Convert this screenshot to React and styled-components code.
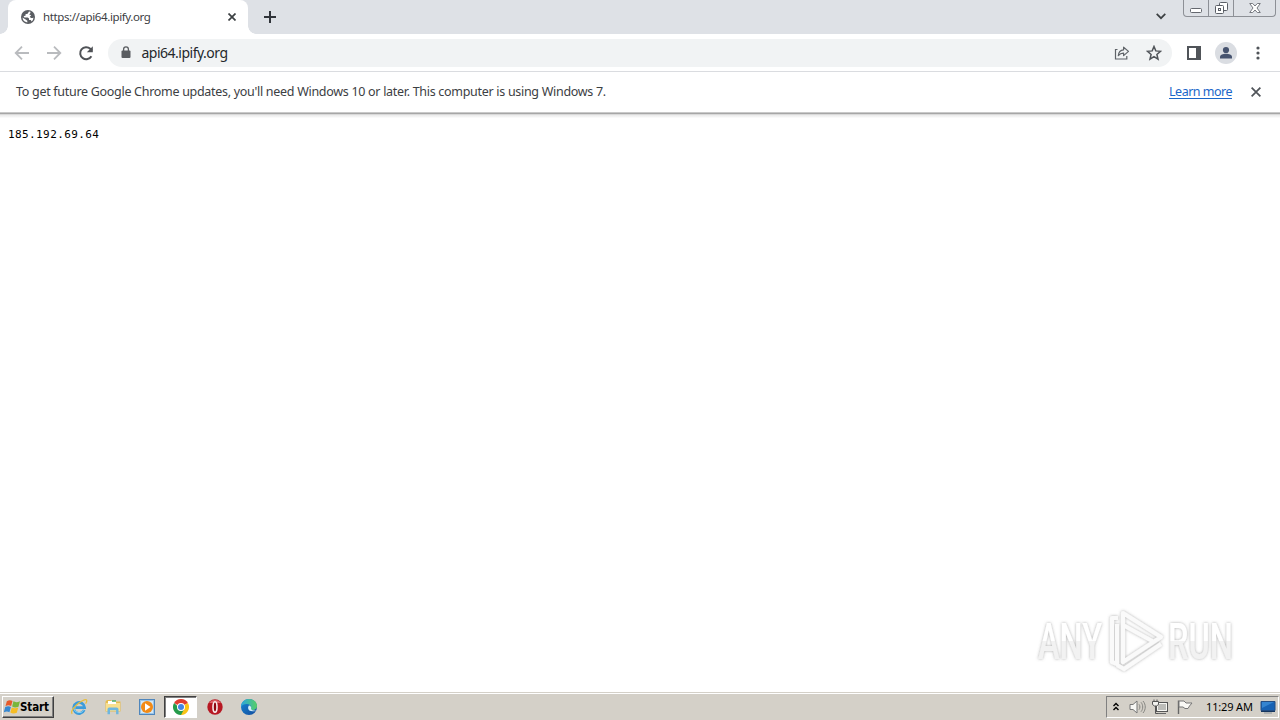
import React from "react";
import styled, { createGlobalStyle } from "styled-components";

const GlobalStyle = createGlobalStyle`
  *, *::before, *::after { box-sizing: border-box; }
  body { margin: 0; background: #fff; font-family: "Noto Sans", "DejaVu Sans", sans-serif; overflow: hidden; }
  svg { display: block; flex: none; }
`;

const Desktop = styled.div`
  width: 1280px;
  height: 720px;
  display: flex;
  flex-direction: column;
  background: #fff;
  position: relative;
`;

const TabStrip = styled.header`
  height: 34px;
  flex: none;
  display: flex;
  background: #dee1e6;
  padding-left: 8px;
`;

const Tab = styled.div`
  width: 240px;
  height: 34px;
  display: flex;
  align-items: center;
  background: #fff;
  border-radius: 8px 8px 0 0;
  padding: 0 12px 0 13px;
  position: relative;
  &::before, &::after {
    content: "";
    position: absolute;
    bottom: 0;
    width: 8px;
    height: 8px;
  }
  &::before { left: -8px; background: radial-gradient(circle at 0 0, transparent 7.5px, #fff 8px); }
  &::after { right: -8px; background: radial-gradient(circle at 100% 0, transparent 7.5px, #fff 8px); }
`;

const Label = styled.span`
  font-size: ${(p) => p.$size || 12}px;
  line-height: 16px;
  letter-spacing: ${(p) => p.$track || 0}px;
  color: ${(p) => p.$color || "#3c4043"};
  white-space: pre;
`;

const TabTitle = styled(Label)`
  flex: 1;
  margin-left: 8px;
`;

const NewTab = styled.div`
  display: flex;
  align-items: center;
  margin-left: 15px;
`;

const StripEnd = styled.div`
  margin-left: auto;
  display: flex;
  padding-right: 4px;
`;

const TabSearch = styled.div`
  padding: 13px 17px 0 0;
`;

const WindowControls = styled.div`
  height: 17px;
  width: 93px;
  display: flex;
  border: 1px solid #8d9096;
  border-top: 0;
  border-radius: 0 0 4px 4px;
`;

const WindowButton = styled.div`
  width: ${(p) => p.$width}px;
  display: flex;
  align-items: center;
  justify-content: center;
  & + & { border-left: 1px solid #8d9096; }
`;

const Toolbar = styled.div`
  height: 38px;
  flex: none;
  display: flex;
  align-items: center;
  padding: 0 13px;
  border-bottom: 1px solid #dadce0;
`;

const NavButtons = styled.div`
  display: flex;
  gap: 14px;
  width: 95px;
`;

const AddressBar = styled.div`
  width: 1064px;
  height: 28px;
  display: flex;
  align-items: center;
  gap: 16px;
  background: #f1f3f4;
  border-radius: 14px;
  padding: 0 10px 0 11px;
`;

const Url = styled(Label)`
  flex: 1;
  margin-left: -7.5px;
`;

const ToolbarEnd = styled.div`
  display: flex;
  align-items: center;
  margin-left: 14px;
`;

const Avatar = styled.div`
  margin: 0 13px;
`;

const InfoBar = styled.div`
  height: 46px;
  flex: none;
  display: flex;
  align-items: flex-start;
  padding: 12px 19px 0 16px;
  background: linear-gradient(#fff 40px, #c9c9c9 40px, #c9c9c9 41px, #a6a6a6 41px, #a6a6a6 42px, #d9d9d9 42px, #d9d9d9 43px, #eaeaea 43px, #f5f5f5 45px, #fff 46px);
`;

const LearnMore = styled(Label)`
  margin-left: auto;
  text-decoration: underline;
  text-underline-offset: 2px;
`;

const InfoClose = styled.div`
  padding: 3px 0 0 19px;
`;

const Page = styled.main`
  flex: 1;
  padding: 8px 8px;
`;

const IpText = styled.pre`
  margin: 0;
  font-family: "DejaVu Sans Mono", monospace;
  font-size: 11px;
  line-height: 18px;
  letter-spacing: 0.4px;
  color: #000;
`;

const Watermark = styled.div`
  position: absolute;
  left: 1030px;
  top: 600px;
`;

const Taskbar = styled.footer`
  height: 28px;
  flex: none;
  display: flex;
  align-items: center;
  padding: 2px 1px 0 2px;
  background: linear-gradient(#d4d0c8 1px, #fff 1px, #fff 2px, #d4d0c8 2px);
`;

const StartButton = styled.div`
  width: 52px;
  height: 22px;
  display: flex;
  align-items: center;
  padding-left: 1px;
  border: 1px solid;
  border-color: #fff #404040 #404040 #fff;
  box-shadow: inset -1px -1px #808080;
`;

const StartText = styled.span`
  margin-left: -1px;
  font: bold 11.5px/16px "DejaVu Sans Condensed", "DejaVu Sans", sans-serif;
  letter-spacing: -0.1px;
  color: #000;
`;

const QuickLaunch = styled.div`
  display: flex;
  margin-left: 8px;
`;

const AppSlot = styled.div`
  width: ${(p) => (p.$active ? 33 : 34)}px;
  height: 22px;
  display: flex;
  align-items: center;
  justify-content: center;
  ${(p) =>
    p.$active &&
    `
    background: #fff;
    border: 1px solid;
    border-color: #404040 #fff #fff #404040;
    box-shadow: inset 1px 1px #808080;
    margin-right: 1px;
  `}
`;

const Tray = styled.div`
  margin-left: auto;
  height: 22px;
  width: 173px;
  display: flex;
  align-items: center;
  padding-left: 6px;
  border: 1px solid;
  border-color: #808080 #fff #fff #808080;
`;

const Clock = styled(Label)`
  margin: 0 7px 0 13px;
`;

const TrayIcon = styled.div`
  margin-left: ${(p) => p.$gap || 0}px;
`;

const Svg = ({ w = 16, h = w, box, children, ...rest }) => (
  <svg width={w} height={h} viewBox={box || `0 0 ${w} ${h}`} fill="none" {...rest}>{children}</svg>
);

const Globe = () => (
  <Svg w={14}>
    <circle cx="7" cy="7" r="7" fill="#5a5d62" />
    <path d="M8 1.5 6.6 3.8 4.4 4.3 4.7 5.6 2.6 6.3 3.4 7.4H6.8L8 8.5V10h1.8l.8 1.4A5.6 5.6 0 0 0 12.5 7.4C11.4 8.3 9.5 8 8.8 6.7L10.2 5.2 8.2 4.6 9.4 3V1.8Z" fill="#fff" />
    <path d="M1.5 7.6A5.6 5.6 0 0 0 6.3 12.5V10.8L4.6 9.5Z" fill="#fff" />
  </Svg>
);

const Cross = ({ size = 8, color = "#3c4043", weight = 1.7 }) => (
  <Svg w={size} box="0 0 8 8"><path d="m.5.5 7 7m0-7-7 7" stroke={color} strokeWidth={weight} /></Svg>
);

const Arrow = ({ flip }) => (
  <Svg w={18} box="0 0 18 18">
    <path d={flip ? "M2 9h13M9 2.7 15.3 9 9 15.3" : "M16 9H3m6-6.3L2.7 9 9 15.3"} stroke="#b9bbbe" strokeWidth="1.8" />
  </Svg>
);

const Reload = () => (
  <Svg w={18}><path d="M14.4 12.2A6 6 0 1 1 13.3 4.8L15 6.5" stroke="#505357" strokeWidth="2" /><path d="M15.8 2.2v6h-6Z" fill="#505357" /></Svg>
);

const Lock = () => (
  <Svg w={14}><rect x="2.5" y="4.5" width="9" height="7.6" rx="1" fill="#5a5d61" /><path d="M4.6 4.9V3.3a2.4 2.4 0 0 1 4.8 0v1.6" stroke="#5a5d61" strokeWidth="1.3" /></Svg>
);

const Share = () => (
  <Svg w={16}>
    <path d="M3.5 4.5H1.5v9.5h11.3v-3" stroke="#5f6368" strokeWidth="1.2" />
    <path d="M4.3 10.7c.3-3.8 2.2-5.7 5.3-5.9V2.2l4.9 4.2-4.9 4.2V8.1c-2.3-.1-3.8.7-5.3 2.6Z" stroke="#5f6368" strokeWidth="1.2" strokeLinejoin="round" />
  </Svg>
);

const Star = () => (
  <Svg w={16}><path d="m8 1.5 1.8 4.4 4.7.4-3.6 3.1 1.1 4.7L8 11.6l-4 2.5 1.1-4.7-3.6-3.1 4.7-.4L8 1.5Z" stroke="#505459" strokeWidth="1.5" /></Svg>
);

const Person = () => (
  <Svg w={22}><circle cx="11" cy="11" r="11" fill="#dadde2" /><circle cx="11" cy="8" r="3.1" fill="#46536f" /><path d="M5 16.5v-1.6c0-2.1 3-3.2 6-3.2s6 1.1 6 3.2v1.6Z" fill="#46536f" /></Svg>
);

const WindowsFlag = () => (
  <Svg w={17} h={18} box="0.7 .8 15 15">
    <path d="M3.2 3.2C5 2 6.6 2 8.2 3L7 7.5c-1.6-1-3.3-1-5 .1Z" fill="#e65a2b" />
    <path d="M9 3.3c1.8 1 3.6.9 5.8-.1L13.5 8c-2 .9-3.9.9-5.6-.1Z" fill="#79b63b" />
    <path d="M1.8 8.4c1.8-1 3.4-1 5-.1l-1.3 4.6c-1.5-.9-3.1-.9-5 .1Z" fill="#3688d1" />
    <path d="M7.6 8.7c1.9 1 3.7.9 5.7 0L12 13.3c-2 1-4 .9-5.7-.1Z" fill="#f6bd25" />
  </Svg>
);

const Explorer = () => (
  <Svg w={18}>
    <path d="M14.2 12.1A5.5 5.5 0 1 1 14.6 9.6H5.4" stroke="#3c9cdb" strokeWidth="2.7" />
    <path d="M13.8 12A5.4 5.4 0 0 1 3.7 9.5" stroke="#86d2f4" strokeWidth="1" />
    <path d="M2.3 15.8C-.1 14.3 4 8.5 9.2 4.8c4.1-3 7-4 7.5-2.6.3.8-.2 2.1-1.1 3.5" stroke="#e8bd3d" strokeWidth="1.3" />
  </Svg>
);

const Folder = () => (
  <Svg w={18}>
    <path d="M1.5 3.5 3 2h4l1 1.5h8.5v10h-15Z" fill="#e5bc50" /><path d="M2 5h14v8H2Z" fill="#f8df8e" />
    <path d="M4 3h8v3H4Z" fill="#fff" /><path d="M8 3h4" stroke="#4dac61" strokeWidth="1.5" />
    <path d="M3.5 16.3v-4.8c0-1.5 1-2 2-2h7c1.3 0 2 .8 2 2v4.8h-2.4v-4.1H6v4.1Z" fill="#6fb6de" />
  </Svg>
);

const MediaPlayer = () => (
  <Svg w={16}>
    <rect x=".5" y=".5" width="15" height="15" fill="#9ac5e9" stroke="#4f86bc" /><path d="M2 2h12v12H2Z" fill="#d4e8f6" />
    <circle cx="8" cy="8" r="6" fill="#f28a16" /><path d="m6 4.3 5.5 3.7L6 11.7Z" fill="#fff" />
  </Svg>
);

const Chrome = () => (
  <Svg w={16}>
    <path d="M8 8 1.07 4A8 8 0 0 1 14.93 4Z" fill="#df3e30" />
    <path d="M8 8 14.93 4A8 8 0 0 1 8 16L4.8 10Z" fill="#fac316" />
    <path d="M1.07 4A8 8 0 0 0 8 16l3.2-6H8Z" fill="#259b4b" />
    <circle cx="8" cy="8" r="4" fill="#fff" /><circle cx="8" cy="8" r="3" fill="#4285e4" />
  </Svg>
);

const Opera = () => (
  <Svg w={16}><circle cx="8" cy="8" r="7.7" fill="#b71823" /><path d="M2 4a7.5 7.5 0 0 1 12 0Z" fill="#de6268" /><ellipse cx="8" cy="8" rx="2" ry="5.2" fill="#8e0710" stroke="#f8eeee" strokeWidth="1.6" /></Svg>
);

const Edge = () => (
  <Svg w={18}>
    <defs>
      <linearGradient id="edgeTop" x1="0" x2="1"><stop stopColor="#2aa5df" /><stop offset="1" stopColor="#57cf65" /></linearGradient>
      <linearGradient id="edgeBody" x1="0" x2="1" y2="1"><stop stopColor="#1686d3" /><stop offset="1" stopColor="#124b9d" /></linearGradient>
    </defs>
    <circle cx="9" cy="9" r="8" fill="url(#edgeBody)" />
    <path d="M1 9C1 4 4.5 1 9 1s8 3 8 7c0 2.5-2 4-4.3 4-2 0-3.2-.8-2.2-1.7C12 8.6 10 6 6.8 6 4 6 2 7.2 1 9Z" fill="url(#edgeTop)" />
    <path d="M8.6 8c-2 4 2 6.7 7.8 4.6-3.1.2-5.8-.7-5.3-2.3.5-1.6-1.6-3.7-2.5-2.3Z" fill="#d4eef7" />
  </Svg>
);

const Speaker = () => (
  <Svg w={17} h={16}>
    <path d="M1 5.5h3L8 2v12l-4-3.5H1Z" fill="#f7f7f4" stroke="#777" />
    <path d="M10 5.3c1.2 1.6 1.2 3.8 0 5.4m2-7.4c2.3 2.6 2.3 6.8 0 9.4M14 2c3 3.5 3 8.5 0 12" stroke="#858581" />
  </Svg>
);

const Network = () => (
  <Svg w={17} h={16}>
    <rect x="4.5" y="3.5" width="11" height="9" fill="#bdbdb9" stroke="#565656" /><path d="M5.5 4.5h9v7h-9Z" stroke="#f8f8f4" />
    <path d="M6 14.5h8" stroke="#666" /><path d="M.5 2.5h6v3l-2 1.5h-2L.5 5.5Z" fill="#f2f2ee" stroke="#555" />
    <path d="M2 .5v2m3-2v2M3.5 7v7.5H6" stroke="#555" />
  </Svg>
);

const Flag = () => (
  <Svg w={17} h={16}><path d="M2.5 15V1.5" stroke="#666" strokeWidth="1.4" /><path d="M3 2h5l2 2h6l-2.5 3-1.5 2.5H9L7 8H3Z" fill="#faf9f5" stroke="#777" /></Svg>
);

const Screen = () => (
  <Svg w={16}>
    <path d="M1 2.5h14v9H1Z" fill="#1762b4" stroke="#254e83" /><path d="M2 3h12L2 9Z" fill="#3484d0" />
    <path d="M1 12.5h14" stroke="#16365f" /><path d="M4 14h8" stroke="#8b949c" />
  </Svg>
);

const AnyRunLogo = () => (
  <Svg w={250} h={80}>
    <defs>
      <linearGradient id="logoFace" gradientUnits="userSpaceOnUse" x1="0" y1="20" x2="0" y2="61">
        <stop offset=".5" stopColor="#fff" /><stop offset=".52" stopColor="#f2f2f2" /><stop offset="1" stopColor="#f2f2f2" />
      </linearGradient>
      <filter id="logoShade" x="-10%" y="-20%" width="120%" height="140%">
        <feDropShadow dx="0" dy="0" stdDeviation="1.7" floodColor="#666" floodOpacity=".55" />
      </filter>
    </defs>
    <g filter="url(#logoShade)" fill="url(#logoFace)" fontFamily="Roboto, sans-serif" fontSize="50" fontWeight="500">
      <text x="8" y="59" textLength="64" lengthAdjust="spacingAndGlyphs">ANY</text>
      <text x="138" y="59" textLength="65" lengthAdjust="spacingAndGlyphs">RUN</text>
      <g fill="none" stroke="#fafafa" strokeWidth="4.2" strokeLinejoin="round">
        <path d="M93 46V13l38 24-38 25Zm0-21 31 17" />
        <path d="M88 18h-6v44l5 2V24M87 65l7 4 37-25" />
      </g>
    </g>
  </Svg>
);

export default function App() {
  return (
    <>
      <GlobalStyle />
      <Desktop>
        <TabStrip>
          <Tab>
            <Globe />
            <TabTitle $size={11.5} $track={-0.39}>https://api64.ipify.org</TabTitle>
            <Cross size={8} />
          </Tab>
          <NewTab><Svg w={14}><path d="M7 1v12M1 7h12" stroke="#30343a" strokeWidth="2" /></Svg></NewTab>
          <StripEnd>
            <TabSearch><Svg w={10} h={7}><path d="m.7.9 4.3 4.3L9.3.9" stroke="#3c4043" strokeWidth="1.7" /></Svg></TabSearch>
            <WindowControls>
              <WindowButton $width={24}><Svg w={12} h={16}><rect x=".5" y="8.5" width="11" height="4" rx="1" fill="#fff" stroke="#65686f" /></Svg></WindowButton>
              <WindowButton $width={25}>
                <Svg w={13} h={16}><g fill="#fff" stroke="#5a5e66"><rect x="4.5" y="2.5" width="8" height="8" rx="1" /><rect x=".5" y="5.5" width="8" height="8" rx="1" /><rect x="3.5" y="8.5" width="2" height="2" /></g></Svg>
              </WindowButton>
              <WindowButton $width={42}>
                <Svg w={12} h={16}><path d="M.7 3.5h3L6 6l2.3-2.5h3L8 8l3.3 4.5h-3L6 10l-2.3 2.5h-3L4 8Z" fill="#fff" stroke="#777a81" /></Svg>
              </WindowButton>
            </WindowControls>
          </StripEnd>
        </TabStrip>

        <Toolbar>
          <NavButtons><Arrow /><Arrow flip /><Reload /></NavButtons>
          <AddressBar>
            <Lock />
            <Url $size={14} $track={-0.5} $color="#25282c">api64.ipify.org</Url>
            <Share />
            <Star />
          </AddressBar>
          <ToolbarEnd>
            <Svg w={16}><path d="M2 2h12v12H2Z" stroke="#505459" strokeWidth="2" /><path d="M10 2h4.5v12H10Z" fill="#505459" /></Svg>
            <Avatar><Person /></Avatar>
            <Svg w={16}><g fill="#505459"><circle cx="8" cy="3" r="1.6" /><circle cx="8" cy="8" r="1.6" /><circle cx="8" cy="13" r="1.6" /></g></Svg>
          </ToolbarEnd>
        </Toolbar>

        <InfoBar>
          <Label $size={12.5} $track={-0.295}>To get future Google Chrome updates, you'll need Windows 10 or later. This computer is using Windows 7.</Label>
          <LearnMore $size={12.5} $track={-0.5} $color="#1a66c9">Learn more</LearnMore>
          <InfoClose><Cross size={10} color="#505459" weight={1.4} /></InfoClose>
        </InfoBar>

        <Page><IpText>185.192.69.64</IpText></Page>

        <Taskbar>
          <StartButton><WindowsFlag /><StartText>Start</StartText></StartButton>
          <QuickLaunch>
            <AppSlot><Explorer /></AppSlot>
            <AppSlot><Folder /></AppSlot>
            <AppSlot><MediaPlayer /></AppSlot>
            <AppSlot $active><Chrome /></AppSlot>
            <AppSlot><Opera /></AppSlot>
            <AppSlot><Edge /></AppSlot>
          </QuickLaunch>
          <Tray>
            <Svg w={6} h={12}><path d="M.5 5 3 2.5 5.5 5m-5 4L3 6.5 5.5 9" stroke="#000" strokeWidth="1.4" /></Svg>
            <TrayIcon $gap={10}><Speaker /></TrayIcon>
            <TrayIcon $gap={6}><Network /></TrayIcon>
            <TrayIcon $gap={7}><Flag /></TrayIcon>
            <Clock $size={11} $track={-0.15} $color="#000">11:29 AM</Clock>
            <Screen />
          </Tray>
        </Taskbar>

        <Watermark><AnyRunLogo /></Watermark>
      </Desktop>
    </>
  );
}
